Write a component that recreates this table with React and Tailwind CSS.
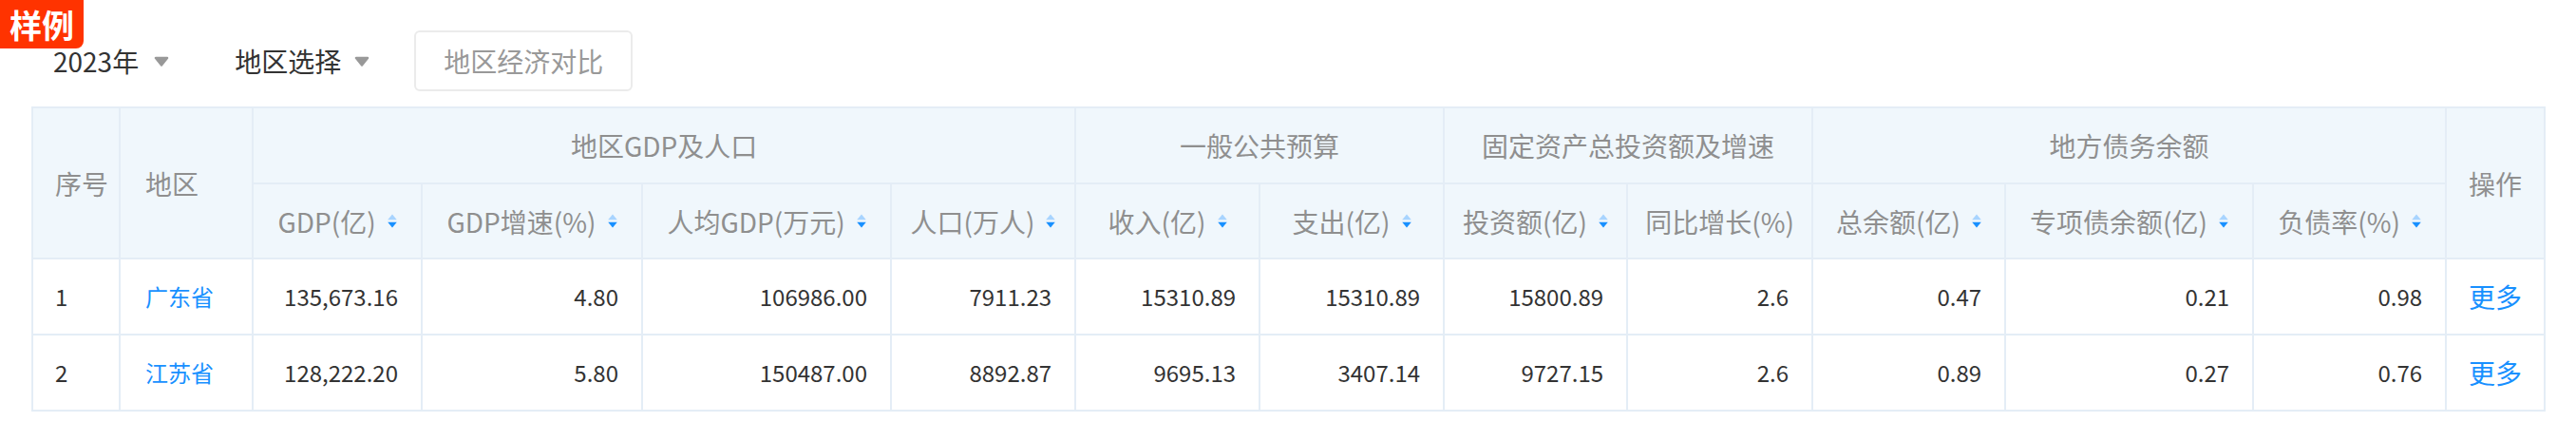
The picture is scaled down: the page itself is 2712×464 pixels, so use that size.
import React from 'react';

const cols = [92, 140, 178, 232, 262, 194, 194, 194, 193, 195, 203, 261, 203, 104];

const rows = [
  { no: 1, region: '广东省', v: ['135,673.16', '4.80', '106986.00', '7911.23', '15310.89', '15310.89', '15800.89', '2.6', '0.47', '0.21', '0.98'] },
  { no: 2, region: '江苏省', v: ['128,222.20', '5.80', '150487.00', '8892.87', '9695.13', '3407.14', '9727.15', '2.6', '0.89', '0.27', '0.76'] },
];

const subHeads = [
  { t: 'GDP(亿)', sort: true },
  { t: 'GDP增速(%)', sort: true },
  { t: '人均GDP(万元)', sort: true },
  { t: '人口(万人)', sort: true },
  { t: '收入(亿)', sort: true },
  { t: '支出(亿)', sort: true },
  { t: '投资额(亿)', sort: true },
  { t: '同比增长(%)', sort: false },
  { t: '总余额(亿)', sort: true },
  { t: '专项债余额(亿)', sort: true },
  { t: '负债率(%)', sort: true },
];

function SortIcon() {
  return (
    <svg width="10" height="15" viewBox="0 0 10 15" className="shrink-0">
      <path d="M5 0.5L9.8 6.2H0.2z" fill="#a8d4ff" />
      <path d="M0.2 8.8H9.8L5 14.5z" fill="#1890ff" />
    </svg>
  );
}

function Caret() {
  return (
    <svg width="16" height="11" viewBox="0 0 16 11">
      <path d="M2 2h12L8 9.5z" fill="#999" stroke="#999" strokeWidth="2.5" strokeLinejoin="round" />
    </svg>
  );
}

export default function App() {
  const th = 'border-2 border-[#e4edf6] bg-[#f0f7fc] text-[#8f8f8f] font-normal text-[28px]';
  const td = 'border-2 border-[#e4edf6] text-[24px] text-[#333]';

  return (
    <div className="relative w-[2712px] h-[464px] bg-white font-['Noto_Sans_CJK_SC',sans-serif]">
      <div className="absolute top-0 left-0 w-[88px] h-[51px] bg-[#ff3300] rounded-br-[8px] flex items-center justify-center text-white font-bold text-[34px] leading-none">
        样例
      </div>

      <div className="px-[33px] pt-[32px]">
        <div className="flex items-center h-[64px] pl-[23px] text-[28px] text-[#333]">
          <div className="flex items-center gap-[16px]">
            <span>2023年</span>
            <Caret />
          </div>
          <div className="flex items-center gap-[14px] ml-[69px]">
            <span>地区选择</span>
            <Caret />
          </div>
          <button className="ml-[47px] h-[64px] w-[230px] border-2 border-[#ebebeb] rounded-[6px] text-[#999] text-[28px]">
            地区经济对比
          </button>
        </div>

        <table className="mt-[16px] table-fixed border-collapse w-[2645px]">
          <colgroup>
            {cols.map((w, i) => (
              <col key={i} style={{ width: w }} />
            ))}
          </colgroup>
          <thead>
            <tr className="h-[80px]">
              <th rowSpan={2} className={`${th} text-left pl-[23px]`}>序号</th>
              <th rowSpan={2} className={`${th} text-left pl-[26px]`}>地区</th>
              <th colSpan={4} className={`${th} text-center`}>地区GDP及人口</th>
              <th colSpan={2} className={`${th} text-center`}>一般公共预算</th>
              <th colSpan={2} className={`${th} text-center`}>固定资产总投资额及增速</th>
              <th colSpan={3} className={`${th} text-center`}>地方债务余额</th>
              <th rowSpan={2} className={`${th} text-center`}>操作</th>
            </tr>
            <tr className="h-[79px]">
              {subHeads.map((h) => (
                <th key={h.t} className={th}>
                  <div className="flex items-center justify-center gap-[12px]">
                    <span>{h.t}</span>
                    {h.sort && <SortIcon />}
                  </div>
                </th>
              ))}
            </tr>
          </thead>
          <tbody>
            {rows.map((r) => (
              <tr key={r.no} className="h-[80px]">
                <td className={`${td} pl-[23px]`}>{r.no}</td>
                <td className={`${td} pl-[26px] text-[#1890ff]`}>{r.region}</td>
                {r.v.map((v, i) => (
                  <td key={i} className={`${td} text-right pr-[24px]`}>{v}</td>
                ))}
                <td className={`${td} text-center text-[28px] text-[#1890ff]`}>更多</td>
              </tr>
            ))}
          </tbody>
        </table>
      </div>
    </div>
  );
}
